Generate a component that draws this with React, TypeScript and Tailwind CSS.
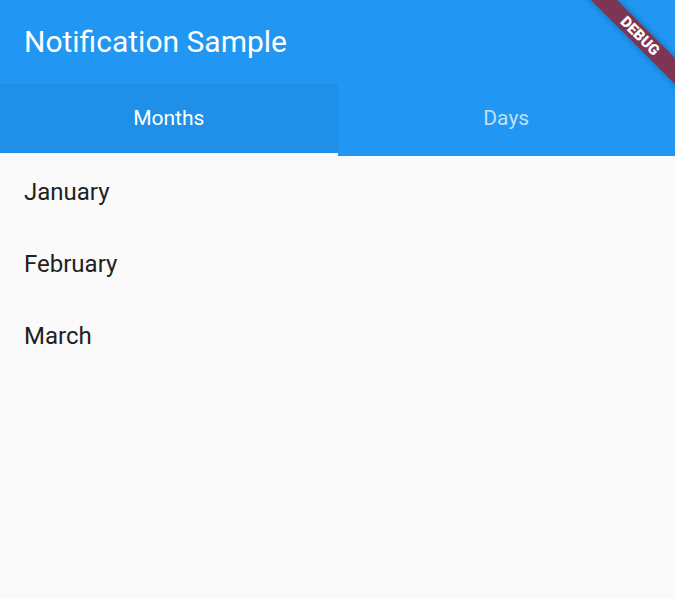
import React from "react";

export default function App() {
  const months = ["January", "February", "March"];
  return (
    <div className="flex h-[599px] w-[676px] bg-white" style={{ fontFamily: "Roboto, 'Noto Sans', sans-serif" }}>
      <div className="relative flex h-full w-[675px] flex-col overflow-hidden bg-[#fafafa]">
        <header className="z-10 flex flex-col bg-[#2196f3]">
          <div className="flex h-[84px] items-center px-6">
            <h1 className="text-[30px] font-normal leading-none text-white">Notification Sample</h1>
          </div>
          <div className="flex h-[72px]">
            <div className="flex flex-1 flex-col">
              <div className="flex h-[69px] items-center justify-center bg-[#1f8fe8]">
                <span className="text-[21px] font-normal leading-none text-white">Months</span>
              </div>
              <div className="h-[3px] bg-white" />
            </div>
            <div className="flex flex-1 items-center justify-center pb-[3px]">
              <span className="text-[21px] font-normal leading-none text-[#bde0fb]">Days</span>
            </div>
          </div>
        </header>
        <ul className="flex flex-col">
          {months.map((m) => (
            <li key={m} className="flex h-[72px] items-center px-6 text-[24px] leading-none text-[#212121]">
              {m}
            </li>
          ))}
        </ul>
        <div className="absolute left-[560px] top-[26.5px] z-20 flex h-[18px] w-[160px] rotate-45 items-center justify-center bg-[#7c3552] shadow-[0_0_6px_rgba(0,0,0,0.35)]">
          <span className="text-[15px] font-black leading-none tracking-normal text-white">DEBUG</span>
        </div>
      </div>
      <div className="h-full w-px bg-[#fdfdfd]" />
    </div>
  );
}
